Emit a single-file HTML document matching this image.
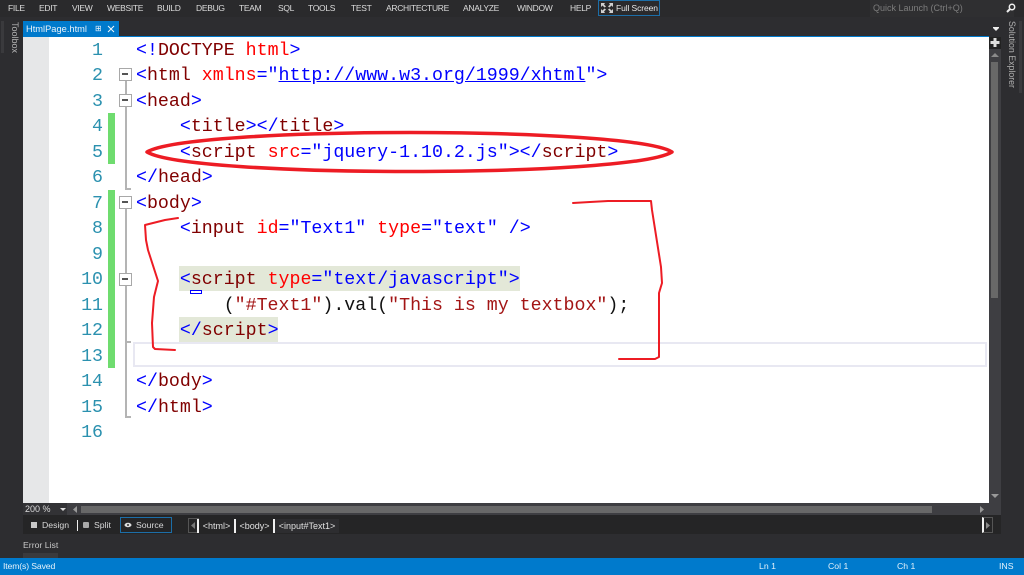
<!DOCTYPE html>
<html><head><meta charset="utf-8"><style>
html,body{margin:0;padding:0;width:1024px;height:575px;overflow:hidden;background:#2d2d30}
body{position:relative;font-family:"Liberation Sans",sans-serif}
.a{position:absolute}
.m{position:absolute;top:3px;font-size:8.5px;letter-spacing:-.3px;line-height:11px;color:#dcdcdc;white-space:nowrap}
.c{position:absolute;left:136px;font-family:"Liberation Mono",monospace;font-size:18.28px;line-height:25px;white-space:pre;color:#800000}
.n{position:absolute;left:70px;width:33px;text-align:right;font-family:"Liberation Mono",monospace;font-size:18.28px;line-height:25px;color:#2b91af}
b{font-weight:normal;color:#00f}
i{font-style:normal;color:#f00}
u{color:#00f}
.s{position:absolute;font-size:8.7px;line-height:11px;color:#d8d8d8;white-space:nowrap}
.o{position:absolute;left:119px;width:13px;height:13px;box-sizing:border-box;border:1.5px solid #a8a8a8;background:#fff}
.o:after{content:"";position:absolute;left:2px;top:4px;width:6px;height:1.5px;background:#555}
.bc{position:absolute;top:519px;height:14px;font-size:9px;line-height:14px;color:#e0e0e0;text-align:center;border-right:2px solid #f0f0f0}
</style></head><body>

<div class="a" style="left:0;top:0;width:1024px;height:17px;background:#2a2a2c"></div>
<div class="m" style="left:8px">FILE</div>
<div class="m" style="left:39px">EDIT</div>
<div class="m" style="left:72px">VIEW</div>
<div class="m" style="left:107px">WEBSITE</div>
<div class="m" style="left:157px">BUILD</div>
<div class="m" style="left:196px">DEBUG</div>
<div class="m" style="left:239px">TEAM</div>
<div class="m" style="left:278px">SQL</div>
<div class="m" style="left:308px">TOOLS</div>
<div class="m" style="left:351px">TEST</div>
<div class="m" style="left:386px">ARCHITECTURE</div>
<div class="m" style="left:463px">ANALYZE</div>
<div class="m" style="left:517px">WINDOW</div>
<div class="m" style="left:570px">HELP</div>
<div class="a" style="left:598px;top:0;width:62px;height:16px;border:1px solid #1c6ea8;box-sizing:border-box"></div>
<svg class="a" style="left:601px;top:3px" width="12" height="10" viewBox="0 0 12 10"><path d="M0 0h4L3 1.500 5 3.500 3.500 4.500 1.500 2.500 0 4zM12 0H8l1 1.500L7 3.500l1.500 1 2-2L12 4zM0 10h4L3 8.500l2-2-1.500-1-2 2L0 6zM12 10H8l1-1.500-2-2 1.500-1 2 2L12 6z" fill="#d0d0d0"/></svg>
<div class="m" style="left:616px;color:#e8e8e8;letter-spacing:-.1px">Full Screen</div>
<div class="a" style="left:870px;top:0;width:144px;height:17px;background:#2f2f31"></div>
<div class="m" style="left:873px;top:3px;color:#7c7c7c;font-size:9px;letter-spacing:0">Quick Launch (Ctrl+Q)</div>
<svg class="a" style="left:1006px;top:3px" width="10" height="10" viewBox="0 0 10 10"><circle cx="6" cy="4" r="2.700" fill="none" stroke="#eee" stroke-width="1.500"/><path d="M4 6L1 9" stroke="#eee" stroke-width="2"/></svg>

<div class="a" style="left:1px;top:21px;width:3px;height:32px;background:#3a3a3d"></div>
<div class="a" style="left:9px;top:22px;font-size:9px;line-height:11px;color:#b0b0b0;writing-mode:vertical-rl">Toolbox</div>
<div class="a" style="left:1006px;top:21px;font-size:8.800px;line-height:11px;color:#b0b0b0;writing-mode:vertical-rl">Solution Explorer</div>
<div class="a" style="left:1019px;top:21px;width:3px;height:72px;background:#3a3a3d"></div>

<div class="a" style="left:23px;top:21px;width:96px;height:15px;background:#007acc"></div>
<div class="a" style="left:26px;top:23px;font-size:9.300px;line-height:12px;color:#e8f2fa">HtmlPage.html</div>
<div class="a" style="left:95px;top:24px;font-size:8px;line-height:10px;color:#e8f2fa">&#8862;</div>
<svg class="a" style="left:107px;top:25px" width="8" height="8" viewBox="0 0 8 8"><path d="M1 1L7 7M7 1L1 7" stroke="#f2f8fc" stroke-width="1"/></svg>
<div class="a" style="left:23px;top:36px;width:966px;height:1px;background:#007acc"></div>
<svg class="a" style="left:992px;top:27px" width="8" height="5"><path d="M1 0h6v1L4 4 1 1z" fill="#eee"/></svg>

<div class="a" style="left:23px;top:37px;width:966px;height:466px;background:#fff"></div>
<div class="a" style="left:23px;top:37px;width:26px;height:466px;background:#e6e7e8"></div>

<div class="a" style="left:989px;top:37px;width:12px;height:466px;background:#3e3e42"></div>
<div class="a" style="left:989px;top:37px;width:12px;height:12px;background:#222"></div>
<svg class="a" style="left:990px;top:38px" width="10" height="10"><path d="M3.500 0h3v3h3v3h-3v3h-3V6h-3V3h3z" fill="#ddd"/></svg>
<svg class="a" style="left:991px;top:53px" width="8" height="5"><path d="M4 0l4 4H0z" fill="#8a8a8a"/></svg>
<div class="a" style="left:991px;top:62px;width:7px;height:236px;background:#686868"></div>
<svg class="a" style="left:991px;top:494px" width="8" height="5"><path d="M0 0h8L4 4z" fill="#999"/></svg>

<div class="a" style="left:108px;top:113px;width:7px;height:51px;background:#6fdc6f"></div>
<div class="a" style="left:108px;top:190px;width:7px;height:178px;background:#6fdc6f"></div>

<div class="a" style="left:125px;top:81px;width:1.500px;height:108px;background:#b4b4b4"></div>
<div class="a" style="left:125px;top:208px;width:1.500px;height:209px;background:#b4b4b4"></div>
<div class="a" style="left:125px;top:188px;width:6px;height:1.500px;background:#b4b4b4"></div>
<div class="a" style="left:125px;top:416px;width:6px;height:1.500px;background:#b4b4b4"></div>
<div class="a" style="left:125px;top:341px;width:6px;height:1.500px;background:#b4b4b4"></div>
<div class="o" style="top:68px"></div>
<div class="o" style="top:94px"></div>
<div class="o" style="top:196px"></div>
<div class="o" style="top:273px"></div>

<div class="a" style="left:133px;top:342px;width:854px;height:25px;box-sizing:border-box;border:2px solid #e8e8f2"></div>
<div class="a" style="left:179px;top:266px;width:341px;height:25px;background:#e3e8d8"></div>
<div class="a" style="left:179px;top:317px;width:99px;height:25px;background:#e3e8d8"></div>
<div class="a" style="left:190px;top:290px;width:12px;height:4px;box-sizing:border-box;border:1px solid #00f"></div>

<div class="n" style="top:39px">1</div>
<div class="n" style="top:64px">2</div>
<div class="n" style="top:90px">3</div>
<div class="n" style="top:115px">4</div>
<div class="n" style="top:141px">5</div>
<div class="n" style="top:166px">6</div>
<div class="n" style="top:192px">7</div>
<div class="n" style="top:217px">8</div>
<div class="n" style="top:243px">9</div>
<div class="n" style="top:268px">10</div>
<div class="n" style="top:294px">11</div>
<div class="n" style="top:319px">12</div>
<div class="n" style="top:345px">13</div>
<div class="n" style="top:370px">14</div>
<div class="n" style="top:396px">15</div>
<div class="n" style="top:421px">16</div>

<div class="c" style="top:39px"><b>&lt;!</b>DOCTYPE <i>html</i><b>&gt;</b></div>
<div class="c" style="top:64px"><b>&lt;</b>html <i>xmlns</i><b>="<u>http://www.w3.org/1999/xhtml</u>"&gt;</b></div>
<div class="c" style="top:90px"><b>&lt;</b>head<b>&gt;</b></div>
<div class="c" style="top:115px">    <b>&lt;</b>title<b>&gt;&lt;/</b>title<b>&gt;</b></div>
<div class="c" style="top:141px">    <b>&lt;</b>script <i>src</i><b>="jquery-1.10.2.js"&gt;&lt;/</b>script<b>&gt;</b></div>
<div class="c" style="top:166px"><b>&lt;/</b>head<b>&gt;</b></div>
<div class="c" style="top:192px"><b>&lt;</b>body<b>&gt;</b></div>
<div class="c" style="top:217px">    <b>&lt;</b>input <i>id</i><b>="Text1"</b> <i>type</i><b>="text" /&gt;</b></div>
<div class="c" style="top:268px">    <b>&lt;</b>script <i>type</i><b>="text/javascript"&gt;</b></div>
<div class="c" style="top:294px;color:#111">        (<span style="color:#a31515">"#Text1"</span>).val(<span style="color:#a31515">"This is my textbox"</span>);</div>
<div class="c" style="top:319px">    <b>&lt;/</b>script<b>&gt;</b></div>
<div class="c" style="top:370px"><b>&lt;/</b>body<b>&gt;</b></div>
<div class="c" style="top:396px"><b>&lt;/</b>html<b>&gt;</b></div>

<svg class="a" style="left:0;top:0" width="1024" height="575" fill="none" stroke="#ed1c24" stroke-linejoin="round" stroke-linecap="round">
<path stroke-width="3.500" d="M147 152C190 126 630 126 672 152C630 178 190 178 147 152Z"/>
<path stroke-width="2" d="M178 218L165 220 145 225 146 240 148 250 158 281 154 297 152 323 153 347 155 349 175 350"/>
<path stroke-width="2" d="M573 203L590 202 608 201 651 201 652 210 661 267 662 283 659 293 659 357 655 359 619 359"/>
</svg>

<div class="a" style="left:23px;top:503px;width:978px;height:12px;background:#3e3e42"></div>
<div class="a" style="left:23px;top:503px;width:44px;height:12px;background:#323235"></div>
<div class="a" style="left:25px;top:504px;font-size:9px;line-height:11px;color:#dcdcdc">200 %</div>
<svg class="a" style="left:60px;top:508px" width="7" height="4"><path d="M0 0h6L3 3z" fill="#ddd"/></svg>
<svg class="a" style="left:73px;top:506px" width="5" height="8"><path d="M4 0v7L0 3.500z" fill="#999"/></svg>
<div class="a" style="left:81px;top:506px;width:851px;height:7px;background:#686868"></div>
<svg class="a" style="left:980px;top:506px" width="5" height="8"><path d="M0 0v7l4-3.500z" fill="#999"/></svg>

<div class="a" style="left:23px;top:515px;width:978px;height:19px;background:#252526"></div>
<div class="a" style="left:31px;top:522px;width:6px;height:6px;background:#c8c8c8"></div>
<div class="s" style="left:42px;top:520px">Design</div>
<div class="a" style="left:77px;top:520px;width:1px;height:11px;background:#eee"></div>
<div class="a" style="left:83px;top:522px;width:6px;height:6px;background:#aaa;border-radius:1px"></div>
<div class="s" style="left:94px;top:520px">Split</div>
<div class="a" style="left:120px;top:517px;width:52px;height:16px;box-sizing:border-box;border:1px solid #1c6ea8"></div>
<svg class="a" style="left:124px;top:522px" width="8" height="6"><ellipse cx="4" cy="3" rx="3.500" ry="2.200" fill="#ddd"/><circle cx="4" cy="3" r="1" fill="#333"/></svg>
<div class="s" style="left:136px;top:520px">Source</div>

<div class="a" style="left:188px;top:518px;width:11px;height:15px;box-sizing:border-box;border:1px solid #555"></div>
<svg class="a" style="left:191px;top:522px" width="5" height="8"><path d="M4 0v7L0 3.500z" fill="#777"/></svg>
<div class="a" style="left:197px;top:519px;width:2px;height:14px;background:#f0f0f0"></div>
<div class="bc" style="left:199px;width:35px">&lt;html&gt;</div>
<div class="bc" style="left:236px;width:37px">&lt;body&gt;</div>
<div class="a" style="left:275px;top:519px;width:64px;height:14px;font-size:9px;line-height:14px;color:#e0e0e0;text-align:center;background:#2d2d30">&lt;input#Text1&gt;</div>
<div class="a" style="left:982px;top:517px;width:11px;height:16px;box-sizing:border-box;border:1px solid #555;border-left:2px solid #f0f0f0"></div>
<svg class="a" style="left:986px;top:522px" width="5" height="8"><path d="M0 0v7l4-3.500z" fill="#888"/></svg>

<div class="s" style="left:23px;top:540px;color:#c8c8c8">Error List</div>
<div class="a" style="left:23px;top:553px;width:35px;height:5px;background:#3a3a3d"></div>

<div class="a" style="left:0;top:558px;width:1024px;height:17px;background:#007acc"></div>
<div class="s" style="left:3px;top:561px;color:#e4f1fa;letter-spacing:-.15px">Item(s) Saved</div>
<div class="s" style="left:759px;top:561px;color:#e4f1fa">Ln 1</div>
<div class="s" style="left:828px;top:561px;color:#e4f1fa">Col 1</div>
<div class="s" style="left:897px;top:561px;color:#e4f1fa">Ch 1</div>
<div class="s" style="left:999px;top:561px;color:#e4f1fa">INS</div>
</body></html>
